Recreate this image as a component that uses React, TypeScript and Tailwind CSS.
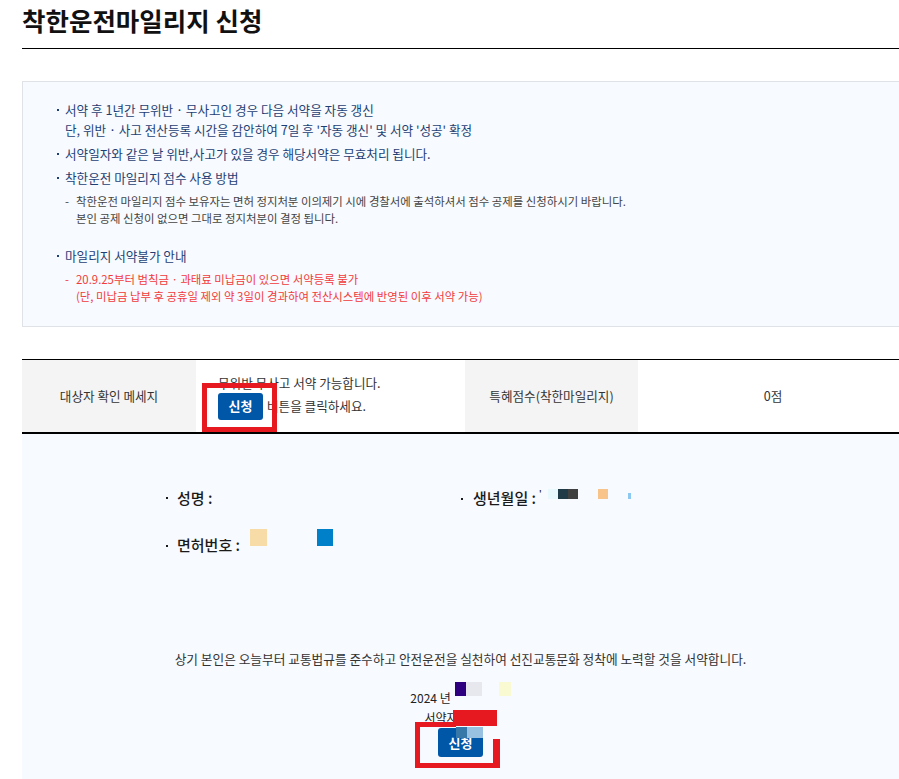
import React from "react";

const FONT = { fontFamily: '"Noto Sans CJK KR", "Noto Sans", sans-serif' };

function Dot({ className = "" }: { className?: string }) {
  return <span className={"block w-[2px] h-[2px] bg-current shrink-0 " + className} />;
}

function Bullet({ children, className = "" }: { children: React.ReactNode; className?: string }) {
  return (
    <div className={"flex " + className}>
      <Dot className="mt-[9px] mr-[6px]" />
      <div>{children}</div>
    </div>
  );
}

function Dash({ children, className = "" }: { children: React.ReactNode; className?: string }) {
  return (
    <div className={"flex pl-[8px] text-[11.4px] leading-[17px] " + className}>
      <span className="w-[11px] shrink-0">-</span>
      <div>{children}</div>
    </div>
  );
}

function Sq({ c, w, h, className = "" }: { c: string; w: string; h: string; className?: string }) {
  return <span className={`block shrink-0 ${w} ${h} ${c} ${className}`} />;
}

export default function App() {
  return (
    <div className="w-[899px] h-[779px] overflow-hidden bg-white text-[#222]" style={FONT}>
      <div className="pl-[22px] w-[908px]">
        {/* Title */}
        <h1 className="h-[49px] border-b border-black pb-[8px] text-[25.5px] leading-[40px] font-bold text-[#111]">
          착한운전마일리지 신청
        </h1>

        {/* Info box */}
        <div className="mt-[32px] w-[886px] border border-[#dfe3e8] bg-[#f7fafe] pl-[34px] pt-[18px] pb-[21px] text-[12.6px] leading-[20px] text-[#1e3f73]">
          <Bullet>
            서약 후 1년간 무위반 · 무사고인 경우 다음 서약을 자동 갱신
            <br />
            단, 위반 · 사고 전산등록 시간을 감안하여 7일 후 '자동 갱신' 및 서약 '성공' 확정
          </Bullet>
          <Bullet className="mt-[4px]">서약일자와 같은 날 위반,사고가 있을 경우 해당서약은 무효처리 됩니다.</Bullet>
          <Bullet className="mt-[4px]">착한운전 마일리지 점수 사용 방법</Bullet>
          <Dash className="mt-[5px] text-[#444]">
            착한운전 마일리지 점수 보유자는 면허 정지처분 이의제기 시에 경찰서에 출석하셔서 점수 공제를 신청하시기 바랍니다.
            <br />
            본인 공제 신청이 없으면 그대로 정지처분이 결정 됩니다.
          </Dash>
          <Bullet className="mt-[19px]">마일리지 서약불가 안내</Bullet>
          <Dash className="mt-[5px] text-[#f23b3b]">
            20.9.25부터 범칙금 · 과태료 미납금이 있으면 서약등록 불가
            <br />
            (단, 미납금 납부 후 공휴일 제외 약 3일이 경과하여 전산시스템에 반영된 이후 서약 가능)
          </Dash>
        </div>

        {/* Table row */}
        <div className="mt-[32px] flex h-[75px] w-[886px] border-t border-b-2 border-black text-[12.6px] text-[#333]">
          <div className="flex w-[174px] items-center justify-center bg-[#f4f4f4]">대상자 확인 메세지</div>
          <div className="relative flex w-[269px] flex-col justify-center pl-[22px]">
            <div className="leading-[20px]">무위반 무사고 서약 가능합니다.</div>
            <div className="flex items-center">
              <span className="flex h-[27px] w-[45px] items-center justify-center rounded-[3px] bg-[#0057a8] text-[13px] font-bold text-white">
                신청
              </span>
              <span className="ml-[4px] leading-[20px]">버튼을 클릭하세요.</span>
            </div>
            <span className="absolute left-[6px] top-[23px] h-[49px] w-[75px] border-[5px] border-[#e5191f]" />
          </div>
          <div className="flex w-[173px] items-center justify-center bg-[#f4f4f4]">특혜점수(착한마일리지)</div>
          <div className="flex flex-1 items-center justify-center">0점</div>
        </div>

        {/* Lower section */}
        <div className="w-[877px] bg-[#f7fafe] pt-[54px] pb-[40px]">
          <div className="grid grid-cols-[296px_1fr] gap-y-[21px] pl-[143px] text-[15px] leading-[20px] font-medium text-[#1a1a1a]">
            <div className="flex items-center">
              <Dot className="ml-[1px] mr-[9px]" />
              <span>성명 :</span>
            </div>
            <div className="flex items-start">
              <Dot className="mt-[10px] mr-[10px]" />
              <span>생년월일 :</span>
              <span className="ml-[3px] text-[9px] leading-[12px]">'</span>
              <Sq c="bg-[#e8f8fc]" w="w-[10px]" h="h-[10px]" className="ml-[6px] mt-[1px]" />
              <Sq c="bg-[#213a48]" w="w-[10px]" h="h-[10px]" className="mt-[1px]" />
              <Sq c="bg-[#404040]" w="w-[10px]" h="h-[10px]" className="mt-[1px]" />
              <Sq c="bg-[#f8c48a]" w="w-[10px]" h="h-[10px]" className="ml-[20px] mt-[1px]" />
              <Sq c="bg-[#8cc8f0]" w="w-[3px]" h="h-[6px]" className="ml-[20px] mt-[5px]" />
            </div>
            <div className="flex items-start">
              <Dot className="ml-[1px] mr-[9px] mt-[16px]" />
              <span className="mt-[6px]">면허번호 :</span>
              <Sq c="bg-[#f8dca8]" w="w-[17px]" h="h-[17px]" className="ml-[10px]" />
              <Sq c="bg-[#0080c8]" w="w-[16px]" h="h-[17px]" className="ml-[50px]" />
            </div>
            <div />
          </div>

          <p className="mt-[94px] text-center text-[12.7px] leading-[20px] text-[#333]">
            상기 본인은 오늘부터 교통법규를 준수하고 안전운전을 실천하여 선진교통문화 정착에 노력할 것을 서약합니다.
          </p>

          <div className="mt-[13px] flex justify-center text-[12px] text-[#222]">
            <span className="mt-[6px] leading-[20px]">2024 년</span>
            <Sq c="bg-[#2e0080]" w="w-[11px]" h="h-[14px]" className="ml-[4px]" />
            <Sq c="bg-[#e6e8ee]" w="w-[16px]" h="h-[14px]" />
            <Sq c="bg-[#fafad2]" w="w-[12px]" h="h-[14px]" className="ml-[17px]" />
          </div>

          <div className="flex justify-center text-[12px] text-[#222]">
            <span className="leading-[20px]">서약자</span>
            <Sq c="bg-[#e5191f]" w="w-[44px]" h="h-[16px]" className="ml-[-5px] mt-[2px]" />
          </div>

          <div className="flex justify-center">
            <div className="relative">
              <span className="flex h-[29px] w-[45px] items-center justify-center rounded-[3px] bg-[#0057a8] text-[13px] font-bold text-white">
                신청
              </span>
              <span className="absolute left-[18px] top-[-1px] h-[11px] w-[11px] bg-[#3878a8]" />
              <span className="absolute left-[29px] top-[-1px] h-[11px] w-[16px] bg-[#98c0e0]" />
              <span className="absolute left-[-23px] top-[-6px] h-[46px] w-[5px] bg-[#e5191f]" />
              <span className="absolute left-[-23px] top-[35px] h-[5px] w-[85px] bg-[#e5191f]" />
              <span className="absolute left-[-23px] top-[-6px] h-[5px] w-[41px] bg-[#e5191f]" />
              <span className="absolute left-[55px] top-[11px] h-[29px] w-[7px] bg-[#e5191f]" />
            </div>
          </div>
        </div>
      </div>
    </div>
  );
}
